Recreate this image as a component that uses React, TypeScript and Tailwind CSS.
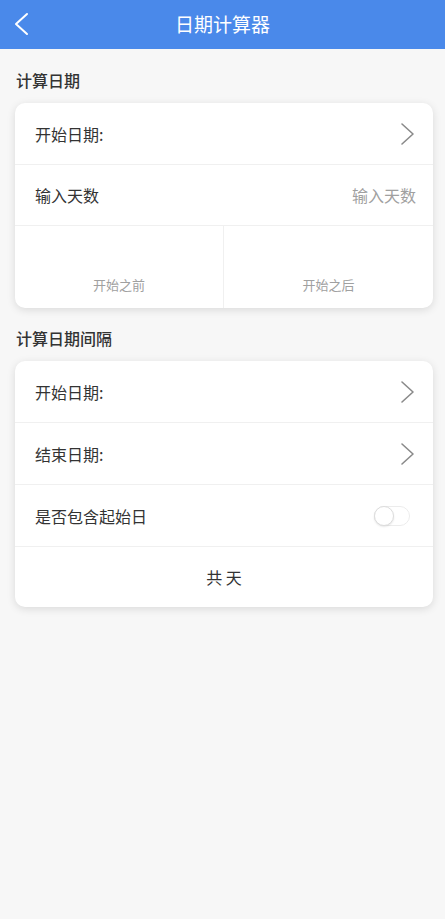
import React, { useState } from "react";

const FONT = { fontFamily: '"Noto Sans CJK SC", "Noto Sans", sans-serif' };

function Chevron() {
  return (
    <svg width="16" height="24" viewBox="0 0 16 24" fill="none">
      <path d="M2 2 L13 12 L2 22" stroke="#8a8a8a" strokeWidth="1.6" strokeLinecap="round" strokeLinejoin="round" />
    </svg>
  );
}

function Row({ label, right, last }: { label: string; right?: React.ReactNode; last?: boolean }) {
  return (
    <div className={`flex h-[62px] items-center justify-between pl-[20px] pr-[17px] ${last ? "" : "border-b border-[#f0f0f0]"}`}>
      <span className="text-[16px] text-[#333]">{label}</span>
      {right}
    </div>
  );
}

export default function App() {
  const [include, setInclude] = useState(false);
  return (
    <div className="min-h-[919px] w-full bg-[#f7f7f7]" style={FONT}>
      <header className="relative flex h-[49px] items-center justify-center bg-[#4a89ea]">
        <button className="absolute left-[13px] top-[12px]">
          <svg width="18" height="24" viewBox="0 0 18 24" fill="none">
            <path d="M14 2 L3 12 L14 22" stroke="#fff" strokeWidth="2" strokeLinecap="round" strokeLinejoin="round" />
          </svg>
        </button>
        <h1 className="text-[19px] text-white">日期计算器</h1>
      </header>

      <div className="pl-[15px] pr-[12px]">
        <h2 className="pb-[11px] pl-[1px] pt-[20px] text-[16px] font-medium leading-[23px] text-[#333]">计算日期</h2>
        <div className="overflow-hidden rounded-[10px] bg-white shadow-[0_2px_8px_rgba(0,0,0,0.12)]">
          <Row label="开始日期:" right={<Chevron />} />
          <div className="flex h-[61px] items-center justify-between border-b border-[#f0f0f0] pl-[20px] pr-[17px]">
            <span className="text-[16px] text-[#333]">输入天数</span>
            <input
              placeholder="输入天数"
              className="w-[120px] bg-transparent text-right text-[16px] text-[#333] outline-none placeholder:text-[#a0a0a0]"
            />
          </div>
          <div className="grid h-[82px] grid-cols-2">
            <button className="flex items-end justify-center border-r border-[#f0f0f0] pb-[14px] text-[13px] text-[#a0a0a0]">开始之前</button>
            <button className="flex items-end justify-center pb-[14px] text-[13px] text-[#a0a0a0]">开始之后</button>
          </div>
        </div>

        <h2 className="pb-[11px] pl-[1px] pt-[19px] text-[16px] font-medium leading-[23px] text-[#333]">计算日期间隔</h2>
        <div className="overflow-hidden rounded-[10px] bg-white shadow-[0_2px_8px_rgba(0,0,0,0.12)]">
          <Row label="开始日期:" right={<Chevron />} />
          <Row label="结束日期:" right={<Chevron />} />
          <Row
            label="是否包含起始日"
            right={
              <button
                onClick={() => setInclude(!include)}
                className={`relative mr-[6px] h-[20px] w-[36px] rounded-full border ${include ? "border-[#4a89ea] bg-[#4a89ea]" : "border-[#ececec] bg-white"}`}
              >
                <span
                  className={`absolute top-[-1px] h-[20px] w-[20px] rounded-full border border-[#dcdcdc] bg-white shadow-[0_1px_2px_rgba(0,0,0,0.1)] ${include ? "left-[15px]" : "left-[-1px]"}`}
                />
              </button>
            }
          />
          <div className="flex h-[60px] items-center justify-center text-[16px] text-[#333]">共 天</div>
        </div>
      </div>
    </div>
  );
}
